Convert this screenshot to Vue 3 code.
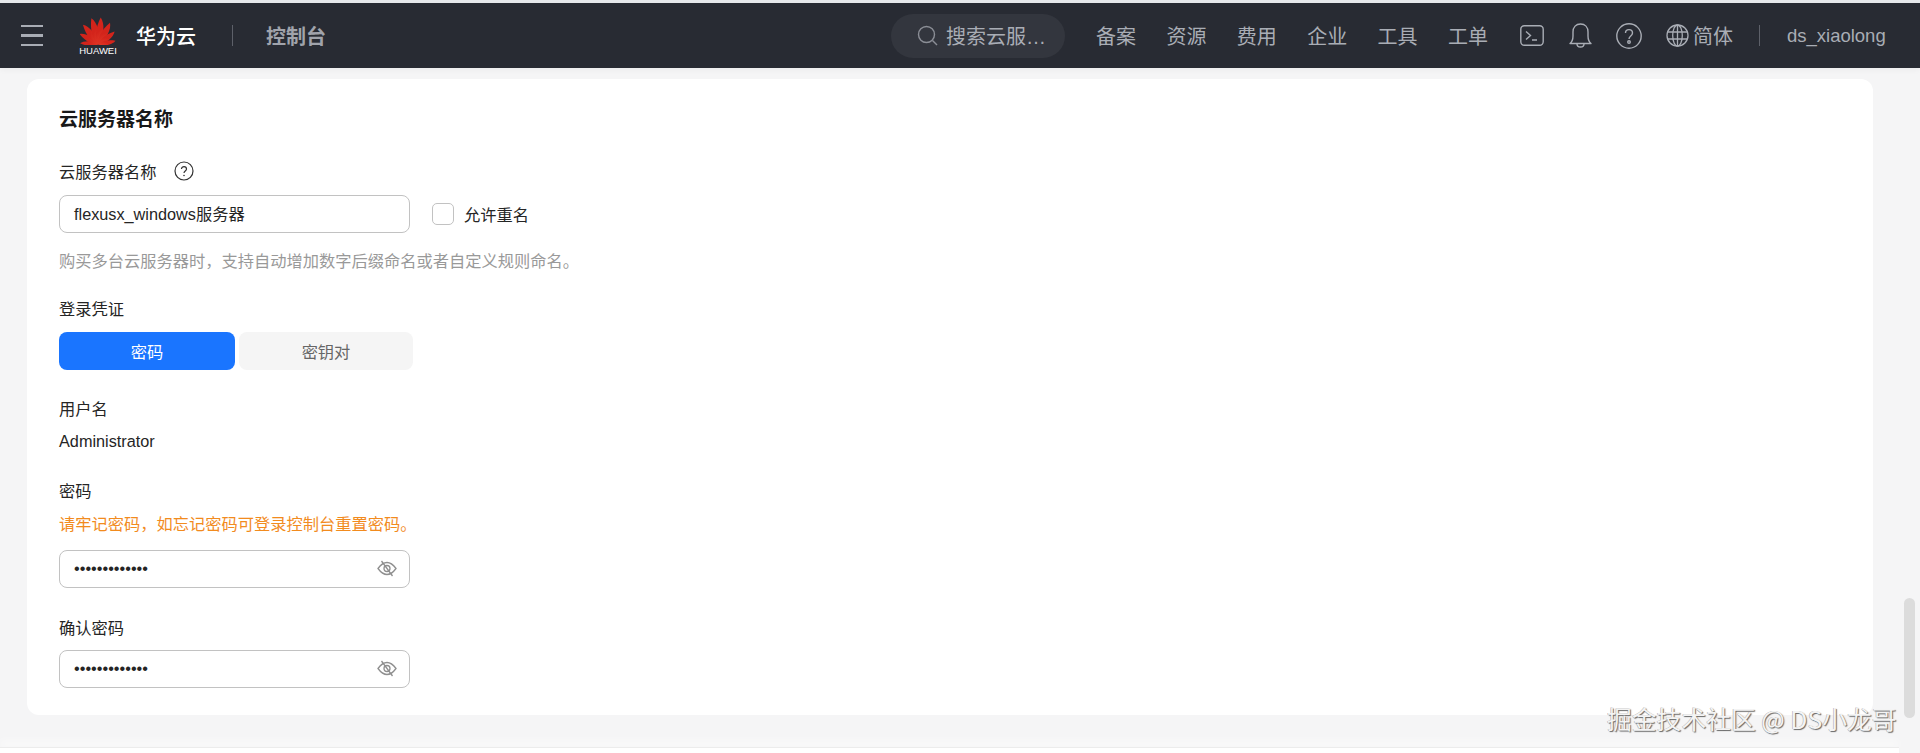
<script setup>
const navItems = ['备案', '资源', '费用', '企业', '工具', '工单']
const petals = [
  { a: -82, l: 0.66 }, { a: -56, l: 0.78 }, { a: -33, l: 0.92 }, { a: -10, l: 1 },
  { a: 10, l: 1 }, { a: 33, l: 0.92 }, { a: 56, l: 0.78 }, { a: 82, l: 0.66 }
]
const petalTransform = (p) => `translate(18 28.5) rotate(${p.a}) scale(${p.l})`
const maskedPassword = '•••••••••••••'
</script>

<template>
  <div class="page">
    <header class="topbar">
      <div class="menu-btn"><span></span><span></span><span></span></div>
      <div class="logo">
        <svg width="36" height="29" viewBox="0 0 36 29">
          <defs>
            <radialGradient id="petal" gradientUnits="userSpaceOnUse" cx="18" cy="4" r="26">
              <stop offset="0" stop-color="#f59a80" />
              <stop offset="0.45" stop-color="#e8432c" />
              <stop offset="1" stop-color="#d3241b" />
            </radialGradient>
          </defs>
          <path
            v-for="p in petals"
            :key="p.a"
            :transform="petalTransform(p)"
            d="M0 0C-4.500-6-5.500-15-2-27C3-22 5-10 0 0Z"
            fill="url(#petal)"
          />
        </svg>
        <span class="logo-text">HUAWEI</span>
      </div>
      <span class="brand">华为云</span>
      <i class="sep sep-brand"></i>
      <span class="console">控制台</span>

      <div class="search">
        <svg width="21" height="21" viewBox="0 0 21 21" fill="none" stroke="#8b8e96" stroke-width="1.4">
          <circle cx="9.5" cy="9.5" r="8" />
          <path d="M15.5 15.5L20 20" />
        </svg>
        <span>搜索云服…</span>
      </div>
      <nav class="nav">
        <a v-for="n in navItems" :key="n">{{ n }}</a>
      </nav>

      <svg class="ico ico-term" width="24" height="21" viewBox="0 0 24 21" fill="none" stroke="#a9adb5" stroke-width="1.4">
        <rect x="0.8" y="0.8" width="22.4" height="19.4" rx="3.5" />
        <path d="M6 6.5L10.5 10.5L6 14.5M12 15H17" />
      </svg>
      <svg class="ico ico-bell" width="23" height="25" viewBox="0 0 23 25" fill="none" stroke="#a9adb5" stroke-width="1.4">
        <path d="M1 20.5C3.5 18.5 4 16.5 4 13V9C4 4 7 1 11.500 1S19 4 19 9V13C19 16.500 19.500 18.500 22 20.500Z" stroke-linejoin="round" />
        <path d="M8 21C8 25 15 25 15 21" />
      </svg>
      <svg class="ico ico-help" width="26" height="26" viewBox="0 0 26 26" fill="none" stroke="#a9adb5" stroke-width="1.4">
        <circle cx="13" cy="13" r="12.200" />
        <path d="M9.500 10C9.500 5.500 16.500 5.500 16.500 10C16.500 13 13 13 13 16" />
        <circle cx="13" cy="19" r="1.300" />
      </svg>
      <svg class="ico ico-globe" width="23" height="23" viewBox="0 0 23 23" fill="none" stroke="#a9adb5" stroke-width="1.300">
        <circle cx="11.500" cy="11.500" r="10.500" />
        <ellipse cx="11.500" cy="11.500" rx="4.800" ry="10.500" />
        <path d="M11.500 1V22M1.800 8H21.200M1.800 15H21.200" />
      </svg>
      <span class="lang">简体</span>
      <i class="sep sep-user"></i>
      <span class="user">ds_xiaolong</span>
    </header>

    <main class="content">
      <section class="card">
        <h2 class="title">云服务器名称</h2>

        <div class="label label-name">
          云服务器名称
          <svg width="20" height="20" viewBox="0 0 20 20" fill="none" stroke="#333" stroke-width="1.200">
            <circle cx="10" cy="10" r="9" />
            <path d="M7.500 8C7.500 4.800 12.500 4.800 12.500 8C12.500 10 10 10 10 12" />
            <circle cx="10" cy="14.500" r="0.800" fill="#333" stroke="none" />
          </svg>
        </div>
        <div class="name-row">
          <div class="input">flexusx_windows服务器</div>
          <label class="check"><i class="box"></i>允许重名</label>
        </div>
        <p class="hint">购买多台云服务器时，支持自动增加数字后缀命名或者自定义规则命名。</p>

        <div class="label label-cred">登录凭证</div>
        <div class="tabs">
          <button class="tab tab-on">密码</button>
          <button class="tab">密钥对</button>
        </div>

        <div class="label label-user">用户名</div>
        <div class="value">Administrator</div>

        <div class="label label-pwd">密码</div>
        <p class="warn">请牢记密码，如忘记密码可登录控制台重置密码。</p>
        <div class="input input-pwd">
          <span>{{ maskedPassword }}</span>
          <svg class="eye" width="20" height="17" viewBox="0 0 20 17" fill="none" stroke="#8f8f8f" stroke-width="1.300">
            <path d="M1 8.500C5 3 8 2.500 10 2.500S15 3 19 8.500C15 14 12 14.500 10 14.500S5 14 1 8.500Z" />
            <circle cx="10" cy="8.500" r="3" />
            <path d="M4.500 1L15.500 16" />
          </svg>
        </div>

        <div class="label label-confirm">确认密码</div>
        <div class="input input-pwd">
          <span>{{ maskedPassword }}</span>
          <svg class="eye" width="20" height="17" viewBox="0 0 20 17" fill="none" stroke="#8f8f8f" stroke-width="1.300">
            <path d="M1 8.500C5 3 8 2.500 10 2.500S15 3 19 8.500C15 14 12 14.500 10 14.500S5 14 1 8.500Z" />
            <circle cx="10" cy="8.500" r="3" />
            <path d="M4.500 1L15.500 16" />
          </svg>
        </div>
      </section>
    </main>

    <div class="bottom-bar"></div>
    <div class="scroll-thumb"></div>
    <div class="watermark">掘金技术社区 @ DS小龙哥</div>
  </div>
</template>

<style>
html, body {
  margin: 0;
  padding: 0;
  overflow: hidden;
}
</style>

<style scoped>
.page {
  position: relative;
  width: 1920px;
  height: 753px;
  overflow: hidden;
  box-sizing: border-box;
  border-top: 3px solid #e6e8eb;
  background: #f5f5f6;
  font-family: "Liberation Sans", "Noto Sans CJK SC", sans-serif;
  color: #1f1f1f;
}

.topbar {
  position: relative;
  display: flex;
  align-items: center;
  height: 65px;
  padding-left: 21px;
  background: #282b33;
  color: #a9adb5;
  box-shadow: 0 2px 6px rgba(0, 0, 0, 0.04);
}
.menu-btn {
  display: flex;
  flex-direction: column;
  gap: 7px;
  width: 22px;
}
.menu-btn span {
  height: 2.500px;
  background: #a9adb5;
}
.logo {
  display: flex;
  flex-direction: column;
  align-items: center;
  width: 36px;
  margin-left: 37px;
}
.logo-text {
  font-size: 9.500px;
  line-height: 11px;
  color: #fff;
}
.brand {
  margin-left: 20px;
  font-size: 20px;
  font-weight: 500;
  color: #fff;
}
.sep {
  width: 1px;
  height: 21px;
  background: #5d6069;
}
.sep-brand {
  margin-left: 36px;
}
.console {
  margin-left: 33px;
  font-size: 20px;
  font-weight: 700;
  color: #a0a3ab;
}
.search {
  display: flex;
  align-items: center;
  gap: 8px;
  width: 174px;
  height: 44px;
  margin-left: 565px;
  padding-left: 26px;
  box-sizing: border-box;
  border-radius: 22px;
  background: #33363e;
  font-size: 20px;
}
.nav {
  display: flex;
  gap: 30.400px;
  margin-left: 31px;
  font-size: 20px;
}
.ico {
  flex: none;
}
.ico-term {
  margin-left: 32px;
}
.ico-bell {
  margin-left: 25px;
}
.ico-help {
  margin-left: 24px;
}
.ico-globe {
  margin-left: 24px;
}
.lang {
  margin-left: 4px;
  font-size: 20px;
}
.sep-user {
  margin-left: 26px;
}
.user {
  margin-left: 27px;
  font-size: 18.500px;
}

.content {
  padding: 11px 47px 0 27px;
}
.card {
  height: 636px;
  padding: 28px 32px 0;
  box-sizing: border-box;
  border-radius: 12px;
  background: #fff;
}
.title {
  margin: 1px 0 -1px;
  font-size: 19px;
  line-height: 24px;
  font-weight: 700;
  color: #191919;
}
.label {
  display: flex;
  align-items: center;
  height: 24px;
  font-size: 16.250px;
  color: #252525;
}
.label-name {
  gap: 17px;
  margin: 28px 0 12px;
}
.label-cred {
  margin: 23px 0 12px;
}
.label-user {
  margin: 26px 0 9px;
}
.label-pwd {
  margin-top: 25px;
}
.label-confirm {
  margin: 27px 0 11px;
}
.name-row {
  display: flex;
  align-items: center;
  gap: 22px;
}
.input {
  display: flex;
  align-items: center;
  justify-content: space-between;
  width: 351px;
  height: 38px;
  padding: 0 14px 2px;
  box-sizing: border-box;
  border: 1px solid #c2c2c2;
  border-radius: 8px;
  font-size: 16.250px;
  color: #252525;
}
.eye {
  margin-right: -2px;
}
.check {
  display: flex;
  align-items: center;
  gap: 10px;
  font-size: 16.250px;
  color: #252525;
}
.box {
  width: 22px;
  height: 22px;
  box-sizing: border-box;
  border: 1px solid #c2c2c2;
  border-radius: 5px;
}
.hint {
  margin: 16px 0 0;
  font-size: 16.250px;
  line-height: 24px;
  color: #999;
}
.tabs {
  display: flex;
  gap: 4px;
}
.tab {
  width: 174px;
  height: 38px;
  padding: 0;
  border: none;
  border-radius: 8px;
  background: #f5f5f5;
  color: #666;
  font: inherit;
  font-size: 16.250px;
}
.tab-on {
  width: 176px;
  background: #1a75ff;
  color: #fff;
}
.value {
  font-size: 16.250px;
  line-height: 24px;
  color: #252525;
}
.warn {
  margin: 10px 0 14px;
  font-size: 16.250px;
  line-height: 24px;
  color: #f28b1e;
}

.bottom-bar {
  position: absolute;
  left: 0;
  bottom: 0;
  width: 1899px;
  height: 6px;
  border-top: 1px solid #ececec;
  box-sizing: border-box;
  background: #fff;
  box-shadow: 0 -6px 8px rgba(255, 255, 255, 0.6);
}
.scroll-thumb {
  position: absolute;
  left: 1904px;
  top: 595px;
  width: 11px;
  height: 120px;
  border-radius: 6px;
  background: #dcdcdc;
}
.watermark {
  position: absolute;
  left: 1607px;
  top: 699px;
  font-family: "Noto Sans CJK SC", sans-serif;
  font-size: 24.800px;
  line-height: 32px;
  white-space: nowrap;
  color: #f4f4f4;
  text-shadow: 1px 1px 1px #666, -0.500px 0 0 #aaa;
}
</style>
